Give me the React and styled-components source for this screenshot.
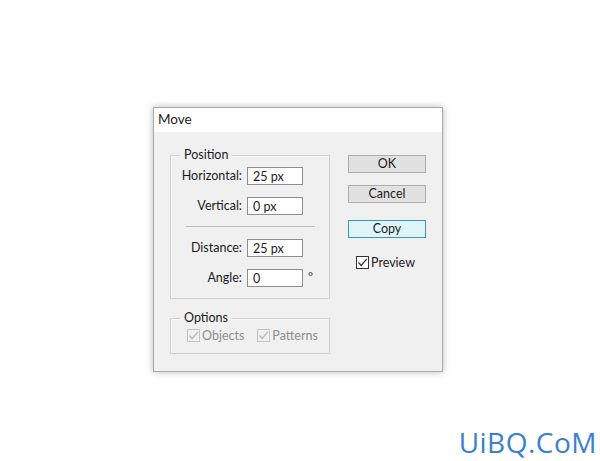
import React, { useState } from "react";
import styled, { createGlobalStyle } from "styled-components";

const GlobalStyle = createGlobalStyle`
  html, body {
    margin: 0;
    padding: 0;
    background: #ffffff;
  }
  body {
    font-family: Lato, "Noto Sans", sans-serif;
  }
`;

const Check = ({ color }) => (
  <svg width="11" height="11" viewBox="0 0 11 11">
    <polyline
      points="1.5,5.5 4.2,8.5 9.8,1.8"
      fill="none"
      stroke={color}
      strokeWidth="1.2"
    />
  </svg>
);

const App = () => {
  const [preview, setPreview] = useState(true);

  return (
    <Page>
      <GlobalStyle />
      <Dialog>
        <TitleBar>Move</TitleBar>
        <Body>
          <LeftColumn>
            <GroupBox>
              <Legend>Position</Legend>
              <FieldGrid>
                <Label>Horizontal:</Label>
                <TextInput defaultValue="25 px" />
                <Unit />
                <Label>Vertical:</Label>
                <TextInput defaultValue="0 px" />
                <Unit />
                <Divider />
                <Label>Distance:</Label>
                <TextInput defaultValue="25 px" />
                <Unit />
                <Label>Angle:</Label>
                <TextInput defaultValue="0" />
                <Unit>°</Unit>
              </FieldGrid>
            </GroupBox>

            <GroupBox $options>
              <Legend>Options</Legend>
              <OptionsRow>
                <CheckRow $disabled>
                  <Box $disabled>
                    <Check color="#b5b5b5" />
                  </Box>
                  Objects
                </CheckRow>
                <CheckRow $disabled>
                  <Box $disabled>
                    <Check color="#b5b5b5" />
                  </Box>
                  Patterns
                </CheckRow>
              </OptionsRow>
            </GroupBox>
          </LeftColumn>

          <RightColumn>
            <Button>OK</Button>
            <Button>Cancel</Button>
            <Button $active>Copy</Button>
            <PreviewRow onClick={() => setPreview(!preview)}>
              <Box>{preview && <Check color="#333" />}</Box>
              Preview
            </PreviewRow>
          </RightColumn>
        </Body>
      </Dialog>
      <Watermark>UiBQ.CoM</Watermark>
    </Page>
  );
};

const Page = styled.div`
  position: relative;
  width: 600px;
  height: 461px;
  box-sizing: border-box;
  padding: 107px 0 0 153px;
  overflow: hidden;
`;

const Dialog = styled.div`
  width: 290px;
  box-sizing: border-box;
  background: #f0f0f0;
  border: 1px solid #a9a9a9;
  box-shadow: 0 0 7px rgba(0, 0, 0, 0.28);
  color: #1b1b1b;
`;

const TitleBar = styled.div`
  height: 24px;
  line-height: 23px;
  background: #ffffff;
  padding-left: 4px;
  font-size: 13.5px;
  color: #222;
`;

const Body = styled.div`
  display: flex;
  gap: 18px;
  padding: 23px 16px 17px 16px;
`;

const LeftColumn = styled.div`
  display: flex;
  flex-direction: column;
  gap: 19px;
  width: 160px;
`;

const GroupBox = styled.div`
  position: relative;
  border: 1px solid #cfcfcf;
  box-shadow: inset 1px 1px 0 #fafafa;
  padding: ${(p) => (p.$options ? "10px 0 11px 16px" : "11px 0 11px 0")};
`;

const Legend = styled.span`
  position: absolute;
  top: -9px;
  left: 9px;
  padding: 0 4px;
  background: #f0f0f0;
  font-size: 12.5px;
  line-height: 16px;
  color: #1b1b1b;
`;

const FieldGrid = styled.div`
  display: grid;
  grid-template-columns: 71px 56px 21px;
  column-gap: 5px;
  row-gap: 12px;
  align-items: center;
`;

const Label = styled.span`
  text-align: right;
  font-size: 12.5px;
  line-height: 16px;
  color: #1b1b1b;
`;

const TextInput = styled.input`
  width: 56px;
  height: 18px;
  box-sizing: border-box;
  border: 1px solid #8f8f8f;
  background: #ffffff;
  padding: 0 5px;
  font-family: Lato, "Noto Sans", sans-serif;
  font-size: 12.5px;
  color: #1b1b1b;
  outline: none;
`;

const Unit = styled.span`
  font-size: 12px;
  line-height: 14px;
  align-self: start;
  margin-top: 1px;
  color: #333;
`;

const Divider = styled.div`
  grid-column: 1 / -1;
  height: 1px;
  background: #bdbdbd;
  margin: -1px 14px 0 15px;
`;

const OptionsRow = styled.div`
  display: flex;
  gap: 13px;
`;

const CheckRow = styled.label`
  display: flex;
  align-items: center;
  gap: 2px;
  height: 13px;
  font-size: 12.5px;
  color: ${(p) => (p.$disabled ? "#8d8d8d" : "#1b1b1b")};
`;

const Box = styled.span`
  display: inline-flex;
  align-items: center;
  justify-content: center;
  width: 13px;
  height: 13px;
  box-sizing: border-box;
  border: 1px solid ${(p) => (p.$disabled ? "#c4c4c4" : "#333")};
  background: ${(p) => (p.$disabled ? "#f0f0f0" : "#ffffff")};
`;

const RightColumn = styled.div`
  display: flex;
  flex-direction: column;
  width: 78px;
`;

const Button = styled.button`
  height: 18px;
  width: 78px;
  margin-bottom: ${(p) => (p.$active ? "18px" : "12px")};
  &:nth-child(3) {
    margin-top: 5px;
  }
  box-sizing: border-box;
  padding: 0;
  font-family: Lato, "Noto Sans", sans-serif;
  font-size: 12.5px;
  line-height: 16px;
  color: #1b1b1b;
  background: ${(p) => (p.$active ? "#dff5fa" : "#e1e1e1")};
  border: 1px solid ${(p) => (p.$active ? "#3e95b3" : "#adadad")};
  cursor: pointer;
`;

const PreviewRow = styled.label`
  display: flex;
  align-items: center;
  gap: 2px;
  height: 13px;
  margin-left: 8px;
  font-size: 12.5px;
  color: #1b1b1b;
  cursor: pointer;
`;

const Watermark = styled.div`
  position: absolute;
  right: 3px;
  bottom: 4px;
  font-family: "Open Sans", "Liberation Sans", sans-serif;
  font-size: 28px;
  line-height: 30px;
  letter-spacing: 0.5px;
  color: #3a7fd0;
`;

export default App;
